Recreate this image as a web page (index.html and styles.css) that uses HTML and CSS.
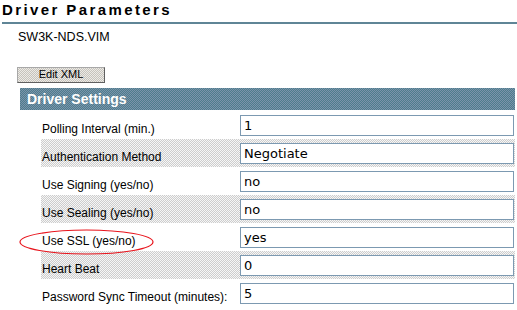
FILE: index.html
```html
<!DOCTYPE html>
<html lang="en">
<head>
  <meta charset="UTF-8" />
  <title>Driver Parameters</title>
  <link rel="stylesheet" href="styles.css">
</head>
<body>
  <h1 class="page-title">Driver Parameters</h1>
  <div class="driver-file">SW3K-NDS.VIM</div>
  <button class="edit-xml">Edit XML</button>

  <div class="section">
    <div class="section-head">Driver Settings</div>
    <table class="settings">
      <tr>
        <td class="label">Polling Interval (min.)</td>
        <td class="field"><input type="text" value="1"></td>
      </tr>
      <tr class="shade">
        <td class="label">Authentication Method</td>
        <td class="field"><input type="text" value="Negotiate"></td>
      </tr>
      <tr>
        <td class="label">Use Signing (yes/no)</td>
        <td class="field"><input type="text" value="no"></td>
      </tr>
      <tr class="shade">
        <td class="label">Use Sealing (yes/no)</td>
        <td class="field"><input type="text" value="no"></td>
      </tr>
      <tr>
        <td class="label marked">
          Use SSL (yes/no)
          <svg class="ring" width="136" height="27" viewBox="0 0 136 27">
            <ellipse cx="67.5" cy="13" rx="66.5" ry="12" fill="none" stroke="#e8141c" stroke-width="1.2"/>
          </svg>
        </td>
        <td class="field"><input type="text" value="yes"></td>
      </tr>
      <tr class="shade">
        <td class="label">Heart Beat</td>
        <td class="field"><input type="text" value="0"></td>
      </tr>
      <tr>
        <td class="label">Password Sync Timeout (minutes):</td>
        <td class="field"><input type="text" value="5"></td>
      </tr>
    </table>
  </div>
</body>
</html>
```

FILE: styles.css
```css
body {
  margin: 0;
  background: #ffffff;
  color: #000;
  font-family: 'Liberation Sans', Arial, sans-serif;
}
.page-title {
  margin: 0 0 0 2px;
  font-size: 15px;
  font-weight: bold;
  letter-spacing: 2.4px;
  line-height: 20px;
  padding-bottom: 2px;
  height: 20px;
  border-bottom: 2px solid #5f8596;
}
.driver-file {
  margin-top: 6px;
  padding-left: 18px;
  font-size: 12.5px;
  line-height: 15px;
}
.edit-xml {
  display: block;
  margin: 22px 0 0 17px;
  width: 88px;
  height: 16px;
  padding: 0 0 1px;
  font-family: 'Liberation Sans', Arial, sans-serif;
  font-size: 11px;
  line-height: 13px;
  color: #000;
  background-color: #d9d7d2;
  background-image: conic-gradient(#c6c3bc 0 25%, #eceae6 0 50%, #c6c3bc 0 75%, #eceae6 0);
  background-size: 2px 2px;
  border: 1px solid #a8a8a8;
  border-right-color: #606060;
  border-bottom-color: #606060;
}
.section {
  margin: 5px 2px 0 20px;
}
.section-head {
  height: 21px;
  padding: 1px 0 0 7px;
  font-size: 14px;
  font-weight: bold;
  line-height: 21px;
  color: #fff;
  background-color: #64889b;
  background-image: conic-gradient(#4d7d8c 0 25%, #7b93ab 0 50%, #4d7d8c 0 75%, #7b93ab 0);
  background-size: 2px 2px;
}
.settings {
  margin: 1px 0 0 21px;
  width: 474px;
  border-collapse: collapse;
}
.settings tr {
  height: 28px;
}
.settings td {
  padding: 0;
  vertical-align: top;
}
.shade {
  background-color: #e1e1e1;
  background-image: conic-gradient(#cdcdcd 0 25%, #f6f6f6 0 50%, #cdcdcd 0 75%, #f6f6f6 0);
  background-size: 2px 2px;
}
.label {
  width: 196px;
  padding: 11px 0 0 1px !important;
  font-size: 12px;
  line-height: 14px;
  white-space: nowrap;
}
.marked {
  position: relative;
}
.ring {
  position: absolute;
  left: -22px;
  top: 6px;
}
.field input {
  display: block;
  box-sizing: border-box;
  margin: 4px 0 0 2px;
  width: 274px;
  height: 21px;
  padding: 0 3px;
  font-family: 'DejaVu Sans', Verdana, sans-serif;
  font-size: 13px;
  color: #000;
  background: #fff;
  border: 1px solid #7c99b1;
  outline: none;
}
```
